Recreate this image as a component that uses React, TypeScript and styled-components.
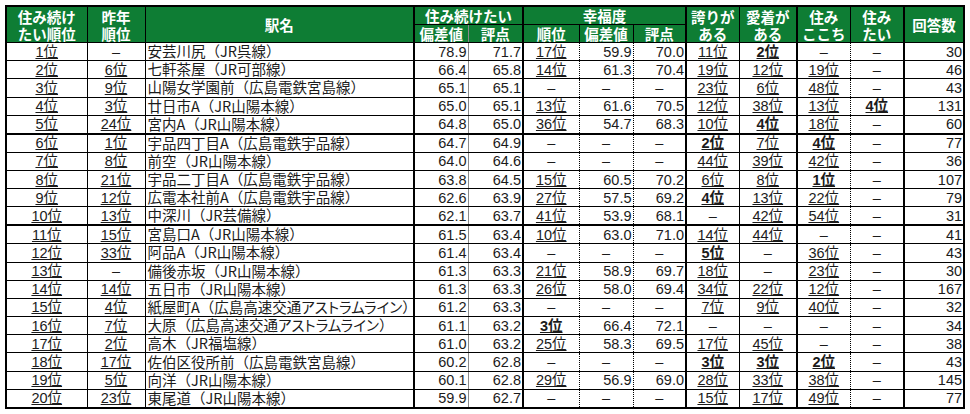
import React from 'react';
import styled, { createGlobalStyle } from 'styled-components';

type Border = 'thin' | 'thick' | 'dot' | 'grey';
type Align = 'left' | 'center' | 'right';

const Global = createGlobalStyle`
  html, body { margin: 0; padding: 0; background: #fff; }
`;

const borderCss = (b: Border) =>
  b === 'thick'
    ? '2px solid #000'
    : b === 'dot'
    ? '1px dotted #000'
    : b === 'grey'
    ? '1px solid #8a8a8a'
    : '1px solid #000';

const Page = styled.div`
  padding: 5px 0 0 5px;
`;

const Sheet = styled.table`
  border-collapse: collapse;
  table-layout: fixed;
  width: 958px;
  border: 2px solid #000;
  font-family: "Liberation Sans Narrow", "Liberation Sans", "Noto Sans CJK JP", sans-serif;
  font-size: 14.5px;
  color: #1b1b1b;
`;

const HeadRow = styled.tr<{ $h: number }>`
  height: ${(p) => p.$h}px;
`;

const HeadCell = styled.th<{ $r: Border }>`
  background: #0e7d34;
  color: #fff;
  font-family: "Noto Sans CJK JP", sans-serif;
  font-weight: 700;
  font-size: 14.5px;
  line-height: 17px;
  padding: 0;
  text-align: center;
  vertical-align: middle;
  white-space: nowrap;
  border: 1px solid #000;
  border-right: ${(p) => borderCss(p.$r)};
`;

const Row = styled.tr`
  height: 18.2px;
`;

const Cell = styled.td<{ $align: Align; $r: Border; $thickBottom: boolean }>`
  padding: 0 ${(p) => (p.$align === 'right' ? '1px' : '0')} 0 ${(p) => (p.$align === 'left' ? '2px' : '0')};
  line-height: 16px;
  white-space: nowrap;
  text-align: ${(p) => p.$align};
  vertical-align: middle;
  border-bottom: ${(p) => (p.$thickBottom ? '2px solid #000' : '1px solid #000')};
  border-right: ${(p) => borderCss(p.$r)};
`;

const Rank = styled.span<{ $bold: boolean }>`
  text-decoration: underline;
  text-underline-offset: 1px;
  font-weight: ${(p) => (p.$bold ? 700 : 400)};
`;

const Name = styled.span`
  font-family: "Noto Sans CJK JP", sans-serif;
`;

const Kana = styled.span`
  font-feature-settings: "palt" 1;
`;

const Dash = styled.span`
  font-family: "Liberation Sans", sans-serif;
`;

const widths = [81, 58, 269, 54, 55, 56, 54, 53, 53, 58, 53, 54, 60];
const rights: Border[] = ['thin', 'thin', 'thick', 'grey', 'thick', 'dot', 'dot', 'thick', 'thin', 'thick', 'dot', 'thick', 'thick'];
const aligns: Align[] = ['center', 'center', 'left', 'right', 'right', 'center', 'right', 'right', 'center', 'center', 'center', 'center', 'right'];
const rankCols = new Set([0, 1, 5, 8, 9, 10, 11]);

const D = '－';
const rows: string[][] = [
  ['1位', D, '安芸川尻（JR呉線）', '78.9', '71.7', '17位', '59.9', '70.0', '11位', '*2位', D, D, '30'],
  ['2位', '6位', '七軒茶屋（JR可部線）', '66.4', '65.8', '14位', '61.3', '70.4', '19位', '12位', '19位', D, '46'],
  ['3位', '9位', '山陽女学園前（広島電鉄宮島線）', '65.1', '65.1', D, D, D, '23位', '6位', '48位', D, '43'],
  ['4位', '3位', '廿日市A（JR山陽本線）', '65.0', '65.1', '13位', '61.6', '70.5', '12位', '38位', '13位', '*4位', '131'],
  ['5位', '24位', '宮内A（JR山陽本線）', '64.8', '65.0', '36位', '54.7', '68.3', '10位', '*4位', '18位', D, '60'],
  ['6位', '1位', '宇品四丁目A（広島電鉄宇品線）', '64.7', '64.9', D, D, D, '*2位', '7位', '*4位', D, '77'],
  ['7位', '8位', '前空（JR山陽本線）', '64.0', '64.6', D, D, D, '44位', '39位', '42位', D, '36'],
  ['8位', '21位', '宇品二丁目A（広島電鉄宇品線）', '63.8', '64.5', '15位', '60.5', '70.2', '6位', '8位', '*1位', D, '107'],
  ['9位', '12位', '広電本社前A（広島電鉄宇品線）', '62.6', '63.9', '27位', '57.5', '69.2', '*4位', '13位', '22位', D, '79'],
  ['10位', '13位', '中深川（JR芸備線）', '62.1', '63.7', '41位', '53.9', '68.1', D, '42位', '54位', D, '31'],
  ['11位', '15位', '宮島口A（JR山陽本線）', '61.5', '63.4', '10位', '63.0', '71.0', '14位', '44位', D, D, '41'],
  ['12位', '33位', '阿品A（JR山陽本線）', '61.4', '63.4', D, D, D, '*5位', D, '36位', D, '43'],
  ['13位', D, '備後赤坂（JR山陽本線）', '61.3', '63.3', '21位', '58.9', '69.7', '18位', D, '23位', D, '30'],
  ['14位', '14位', '五日市（JR山陽本線）', '61.3', '63.3', '26位', '58.0', '69.4', '34位', '22位', '12位', D, '167'],
  ['15位', '4位', '紙屋町A（広島高速交通アストラムライン）', '61.2', '63.3', D, D, D, '7位', '9位', '40位', D, '32'],
  ['16位', '7位', '大原（広島高速交通アストラムライン）', '61.1', '63.2', '*3位', '66.4', '72.1', D, D, D, D, '34'],
  ['17位', '2位', '高木（JR福塩線）', '61.0', '63.2', '25位', '58.3', '69.5', '17位', '45位', D, D, '38'],
  ['18位', '17位', '佐伯区役所前（広島電鉄宮島線）', '60.2', '62.8', D, D, D, '*3位', '*3位', '*2位', D, '43'],
  ['19位', '5位', '向洋（JR山陽本線）', '60.1', '62.8', '29位', '56.9', '69.0', '28位', '33位', '38位', D, '145'],
  ['20位', '23位', '東尾道（JR山陽本線）', '59.9', '62.7', D, D, D, '15位', '17位', '49位', D, '77'],
];

function renderName(v: string) {
  const parts = v.split(/([\u30A0-\u30FF]+)/).filter((s) => s.length > 0);
  return (
    <Name>
      {parts.map((s, i) => (/^[\u30A0-\u30FF]+$/.test(s) ? <Kana key={i}>{s}</Kana> : <React.Fragment key={i}>{s}</React.Fragment>))}
    </Name>
  );
}

function renderValue(v: string, col: number) {
  if (v === D) return <Dash>{'–'}</Dash>;
  if (col === 2) return renderName(v);
  if (rankCols.has(col)) {
    const bold = v.startsWith('*');
    return <Rank $bold={bold}>{bold ? v.slice(1) : v}</Rank>;
  }
  return v;
}

export default function App() {
  return (
    <>
      <Global />
      <Page>
        <Sheet>
          <colgroup>
            {widths.map((w, i) => (
              <col key={i} style={{ width: w }} />
            ))}
          </colgroup>
          <thead>
            <HeadRow $h={18}>
              <HeadCell rowSpan={2} $r="thin">住み続け<br />たい順位</HeadCell>
              <HeadCell rowSpan={2} $r="thin">昨年<br />順位</HeadCell>
              <HeadCell rowSpan={2} $r="thick">駅名</HeadCell>
              <HeadCell colSpan={2} $r="thick">住み続けたい</HeadCell>
              <HeadCell colSpan={3} $r="thick">幸福度</HeadCell>
              <HeadCell rowSpan={2} $r="thin">誇りが<br />ある</HeadCell>
              <HeadCell rowSpan={2} $r="thick">愛着が<br />ある</HeadCell>
              <HeadCell rowSpan={2} $r="dot">住み<br />ここち</HeadCell>
              <HeadCell rowSpan={2} $r="thick">住み<br />たい</HeadCell>
              <HeadCell rowSpan={2} $r="thick">回答数</HeadCell>
            </HeadRow>
            <HeadRow $h={17}>
              <HeadCell $r="grey">偏差値</HeadCell>
              <HeadCell $r="thick">評点</HeadCell>
              <HeadCell $r="dot">順位</HeadCell>
              <HeadCell $r="dot">偏差値</HeadCell>
              <HeadCell $r="thick">評点</HeadCell>
            </HeadRow>
          </thead>
          <tbody>
            {rows.map((r, ri) => (
              <Row key={ri}>
                {r.map((v, ci) => (
                  <Cell
                    key={ci}
                    $align={v === D ? 'center' : aligns[ci]}
                    $r={rights[ci]}
                    $thickBottom={ri === 4 || ri === 9}
                  >
                    {renderValue(v, ci)}
                  </Cell>
                ))}
              </Row>
            ))}
          </tbody>
        </Sheet>
      </Page>
    </>
  );
}
